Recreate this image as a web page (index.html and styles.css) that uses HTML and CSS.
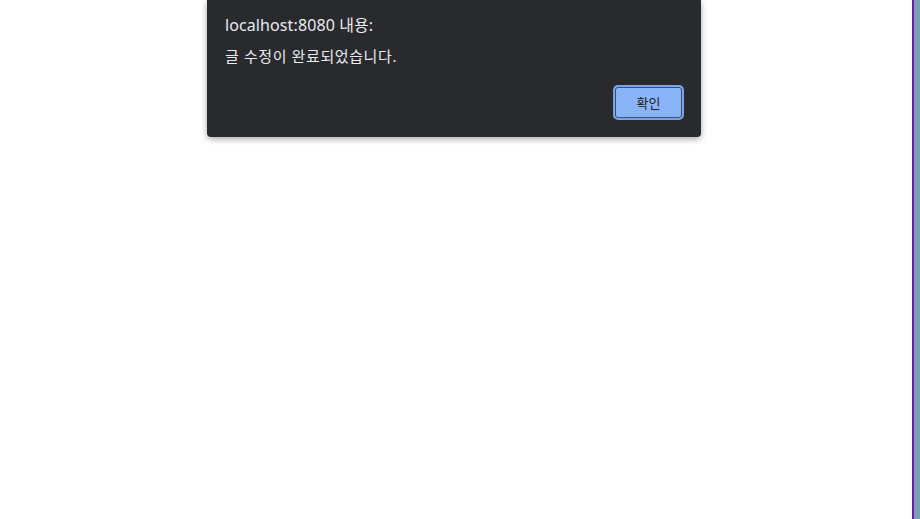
FILE: index.html
```html
<!DOCTYPE html>
<html>
<head>
  <meta charset="utf-8" />
  <title>localhost:8080</title>
  <meta name="viewport" content="width=device-width, initial-scale=1">
  <link rel="stylesheet" href="styles.css">
</head>
<body>
  <div class="page">
    <div class="content">
      <div class="alert-box">
        <p class="alert-title">localhost:8080 내용:</p>
        <p class="alert-msg">글 수정이 완료되었습니다.</p>
        <div class="alert-actions">
          <button class="btn-ok">확인</button>
        </div>
      </div>
    </div>
    <div class="edge-line"></div>
    <div class="edge-bar"></div>
  </div>
</body>
</html>
```

FILE: styles.css
```css
html, body {
  margin: 0px;
  padding: 0px;
  background: #fff;
}
.page {
  display: flex;
  height: 519px;
}
.content {
  flex: 1;
}
.alert-box {
  width: 494px;
  margin-left: 207px;
  box-sizing: border-box;
  padding: 14px 17px 17px 18px;
  background: #292a2d;
  border-radius: 0 0 4px 4px;
  box-shadow: 0 2px 6px rgba(0, 0, 0, 0.35);
  font-family: "Noto Sans", "Noto Sans CJK KR", sans-serif;
  color: #e8eaed;
}
.alert-title {
  margin: 0;
  font-size: 16px;
  line-height: 22px;
  letter-spacing: 0.1px;
}
.alert-msg {
  margin: 10px 0 0 0;
  font-size: 15px;
  line-height: 20px;
  letter-spacing: 0.6px;
}
.alert-actions {
  display: flex;
  justify-content: flex-end;
  margin-top: 19px;
}
.btn-ok {
  width: 71px;
  height: 35px;
  box-sizing: border-box;
  background: #8ab4f8;
  border: 2px solid #7ba4e8;
  border-radius: 5px;
  box-shadow: inset 0 0 0 1px #3d4f70;
  color: #202124;
  font-family: "Noto Sans CJK KR", sans-serif;
  font-size: 13px;
  padding: 0;
}
.edge-line {
  width: 2px;
  background: #6a1fa8;
}
.edge-bar {
  width: 6px;
  background: #7c9dba;
}
```
